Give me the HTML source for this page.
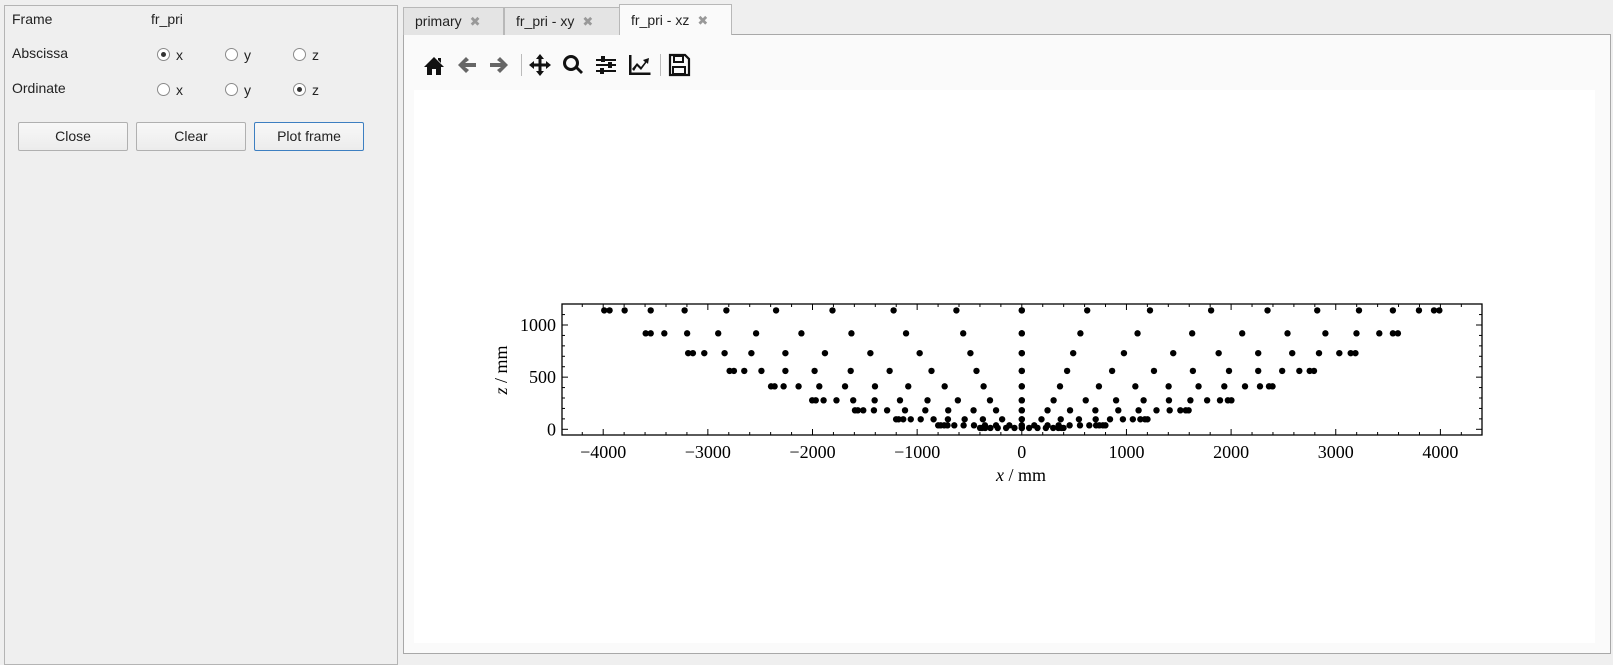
<!DOCTYPE html>
<html><head><meta charset="utf-8"><style>
*{box-sizing:border-box;margin:0;padding:0}
body{width:1613px;height:658px;background:#efefef;font-family:"Liberation Sans","DejaVu Sans",sans-serif;font-size:14px;color:#222;position:relative;overflow:hidden}
.a{position:absolute}
.panel{left:4px;top:5px;width:394px;height:660px;border:1px solid #b4b4b4;background:#efefef}
.lbl{font-size:14px;color:#222}
.radio{width:13px;height:13px;border:1px solid #8a8a8a;border-radius:50%;background:#fff}
.radio.on::after{content:"";position:absolute;left:3px;top:3px;width:5px;height:5px;border-radius:50%;background:#333}
.btn{height:29px;border:1px solid #b0b0b0;border-radius:2px;background:linear-gradient(#f8f8f8,#ececec);text-align:center;line-height:27px;font-size:14px}
.tab{top:7px;height:28px;border:1px solid #b8b8b8;border-bottom:none;background:#e4e4e4;font-size:14px;line-height:27px;padding-left:11px}
.tab span{color:#999;font-size:13px;margin-left:8px}
.pane{left:403px;top:34px;width:1208px;height:620px;border:1px solid #a8a8a8;background:#fafafa}
</style></head><body>
<div class="a panel"></div>
<div class="a lbl" style="left:12px;top:11px">Frame</div>
<div class="a lbl" style="left:151px;top:11px">fr_pri</div>
<div class="a lbl" style="left:12px;top:45px">Abscissa</div>
<div class="a lbl" style="left:12px;top:80px">Ordinate</div>
<div class="a radio on" style="left:157px;top:48px"></div><div class="a lbl" style="left:176px;top:47px">x</div>
<div class="a radio" style="left:225px;top:48px"></div><div class="a lbl" style="left:244px;top:47px">y</div>
<div class="a radio" style="left:293px;top:48px"></div><div class="a lbl" style="left:312px;top:47px">z</div>
<div class="a radio" style="left:157px;top:83px"></div><div class="a lbl" style="left:176px;top:82px">x</div>
<div class="a radio" style="left:225px;top:83px"></div><div class="a lbl" style="left:244px;top:82px">y</div>
<div class="a radio on" style="left:293px;top:83px"></div><div class="a lbl" style="left:312px;top:82px">z</div>
<div class="a btn" style="left:18px;top:122px;width:110px">Close</div>
<div class="a btn" style="left:136px;top:122px;width:110px">Clear</div>
<div class="a btn" style="left:254px;top:122px;width:110px;border-color:#3d7fc1">Plot frame</div>

<div class="a pane"></div>
<div class="a tab" style="left:403px;width:101px">primary<span>✖</span></div>
<div class="a tab" style="left:504px;width:116px">fr_pri - xy<span>✖</span></div>
<div class="a tab" style="left:619px;top:4px;height:31px;width:113px;background:#fafafa;line-height:31px">fr_pri - xz<span>✖</span></div>
<div class="a" style="left:414px;top:90px;width:1181px;height:553px;background:#fff"></div>

<svg class="a" style="left:0;top:0" width="1613" height="658">
<g fill="#111">
<path transform="translate(434,66)" d="M-10,1 L0,-9 L10,1 L7,1 L7,9 L2,9 L2,3 L-2,3 L-2,9 L-7,9 L-7,1 Z M4,-8 h3 v5 l-3,-3z"/>
<path transform="translate(467,65)" fill="#666" d="M-9,0 L-1,-8 L2,-5 L-2,-2 L9,-2 L9,2 L-2,2 L2,5 L-1,8 Z"/>
<path transform="translate(499,65)" fill="#666" d="M9,0 L1,-8 L-2,-5 L2,-2 L-9,-2 L-9,2 L2,2 L-2,5 L1,8 Z"/>
<rect x="521" y="54" width="1" height="22" fill="#bbb"/>
<path transform="translate(540,65)" d="M0,-11 L4,-6 L1.5,-6 L1.5,-1.5 L6,-1.5 L6,-4 L11,0 L6,4 L6,1.5 L1.5,1.5 L1.5,6 L4,6 L0,11 L-4,6 L-1.5,6 L-1.5,1.5 L-6,1.5 L-6,4 L-11,0 L-6,-4 L-6,-1.5 L-1.5,-1.5 L-1.5,-6 L-4,-6 Z"/>
<g transform="translate(573,65)"><circle cx="-2" cy="-2" r="6.5" fill="none" stroke="#111" stroke-width="3"/><path d="M2,3 L4,1 L10,7 L8,9 Z"/></g>
<g transform="translate(606,65)"><rect x="-10" y="-6" width="20" height="2"/><rect x="-10" y="-1" width="20" height="2"/><rect x="-10" y="5" width="20" height="2"/><rect x="-5" y="-9" width="4" height="6"/><rect x="2" y="-3" width="4" height="6"/><rect x="-6" y="3" width="4" height="6"/></g>
<g transform="translate(639,65)"><path d="M-10,-10 h2.5 v17.5 h19 v2.5 h-21.5 z"/><path d="M-7,4 L-2,-2 L2,2 L6,-3 L4,-5 L10,-7 L9,-1 L7.5,-2.5 L2,5 L-2,1 L-5,6 Z"/></g>
<rect x="660" y="54" width="1" height="22" fill="#bbb"/>
<g transform="translate(679,65)"><path d="M-9,-10 h15 l4,4 v16 h-19 z" fill="none" stroke="#111" stroke-width="2.2"/><rect x="-5" y="-9" width="9" height="6" fill="none" stroke="#111" stroke-width="2"/><rect x="-6" y="2" width="12" height="7" fill="none" stroke="#111" stroke-width="2"/></g>
</g>
<g id="plot"></g>
</svg>
<script>
var X=function(d){return 1021.8+d*0.10465},Y=function(z){return 429.3-z*0.1043};
var s='',L=562,R=1482,T=304,B=435;
s+='<rect x="'+L+'" y="'+T+'" width="'+(R-L)+'" height="'+(B-T)+'" fill="none" stroke="#000" stroke-width="1.3"/>';
for(var d=-4400;d<=4400;d+=200){var x=X(d);if(x<L+1||x>R-1)continue;var m=d%1000==0?6:3;
s+='<line x1="'+x+'" x2="'+x+'" y1="'+B+'" y2="'+(B-m)+'" stroke="#000"/><line x1="'+x+'" x2="'+x+'" y1="'+T+'" y2="'+(T+m)+'" stroke="#000"/>';
if(d%1000==0)s+='<text x="'+x+'" y="'+(B+23)+'" text-anchor="middle" font-family="Liberation Serif,serif" font-size="18">'+(d<0?'\u2212'+(-d):d)+'</text>';}
for(var z=0;z<=1200;z+=100){var y=Y(z);if(y<T+1)continue;var m=z%500==0?6:3;
s+='<line x1="'+L+'" x2="'+(L+m)+'" y1="'+y+'" y2="'+y+'" stroke="#000"/><line x1="'+R+'" x2="'+(R-m)+'" y1="'+y+'" y2="'+y+'" stroke="#000"/>';
if(z%500==0)s+='<text x="'+(L-6)+'" y="'+(y+6)+'" text-anchor="end" font-family="Liberation Serif,serif" font-size="18">'+z+'</text>';}
s+='<text x="1021" y="481" text-anchor="middle" font-family="Liberation Serif,serif" font-size="18"><tspan font-style="italic">x</tspan> / mm</text>';
s+='<text transform="translate(507,370) rotate(-90)" text-anchor="middle" font-family="Liberation Serif,serif" font-size="18"><tspan font-style="italic">z</tspan> / mm</text>';
var rows=[[1140,[-3990,-3939,-3795,-3546,-3222,-2823,-2348,-1809,-1225,-625,0]],
[920,[-3594,-3546,-3416,-3198,-2901,-2539,-2106,-1628,-1106,-560,0]],
[730,[-3188,-3143,-3034,-2840,-2584,-2259,-1881,-1447,-976,-491,0]],
[560,[-2792,-2751,-2652,-2488,-2259,-1980,-1635,-1263,-863,-433,0]],
[412,[-2396,-2362,-2276,-2133,-1935,-1689,-1403,-1085,-737,-365,0]],
[278,[-2003,-1969,-1894,-1771,-1611,-1406,-1164,-901,-611,-304,0]],
[182,[-1594,-1567,-1515,-1413,-1287,-1116,-922,-703,-461,-246,0]],
[96,[-1201,-1177,-1133,-1061,-966,-843,-706,-546,-372,-188,0]],
[38,[-799,-775,-741,-710,-645,-556,-457,-352,-246,-119,0]],
[13,[-399,-380,-350,-300,-230,-150,-70,0]]];
rows.forEach(function(r){r[1].forEach(function(d){[d,-d].forEach(function(v){s+='<circle cx="'+X(v)+'" cy="'+Y(r[0])+'" r="3.2" fill="#000"/>';});});});
document.getElementById('plot').innerHTML=s;
</script>
</body></html>
